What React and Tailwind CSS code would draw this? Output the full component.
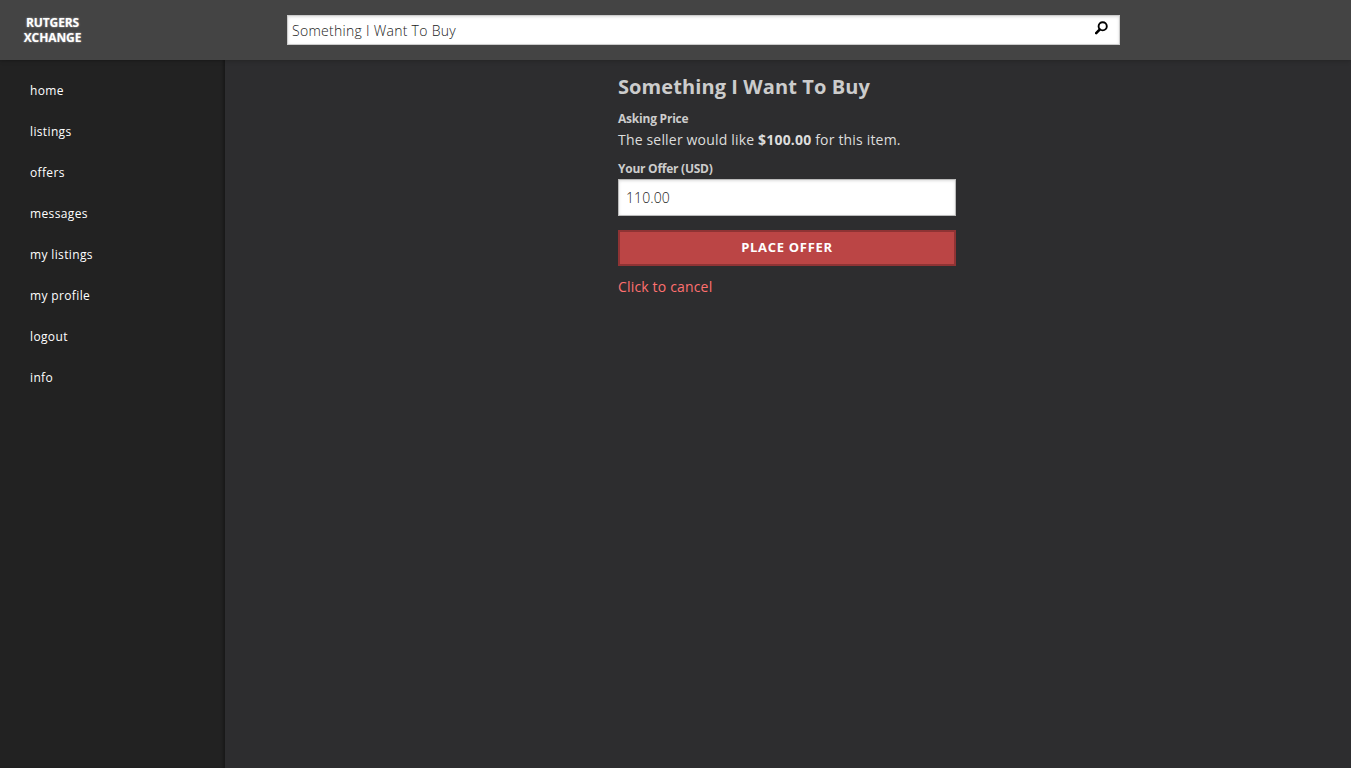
const navItems = ["home", "listings", "offers", "messages", "my listings", "my profile", "logout", "info"];

function Header() {
  return (
    <header className="relative z-10 flex h-[60px] shrink-0 items-center bg-[#444444] shadow-[0_0_5px_rgba(0,0,0,0.3)]">
      <a href="#" className="ml-[22px] w-[61px] text-center text-[12px] leading-[15px] font-bold tracking-[-0.1px] text-white [text-shadow:0_0_2px_rgba(255,255,255,0.6)]">
        RUTGERS XCHANGE
      </a>
      <form className="ml-[204px] flex h-[30px] w-[833px] items-center border border-[#cccccc] bg-white pr-[11px] pl-1 shadow-[inset_0_1px_3px_#dddddd]">
        <input
          aria-label="Search"
          defaultValue="Something I Want To Buy"
          className="h-full min-w-0 flex-1 bg-transparent pt-px text-[14px] font-light tracking-[0.28px] text-[#222222] outline-none"
        />
        <button type="button" aria-label="Submit search" className="mb-1">
          <svg width="13" height="14" viewBox="0 0 13 14" fill="none" stroke="#000000">
            <circle cx="7.7" cy="5.3" r="4.1" strokeWidth="1.9" />
            <path d="M4.6 8.6 1.2 12.1" strokeWidth="2.6" strokeLinecap="round" />
          </svg>
        </button>
      </form>
    </header>
  );
}

function Sidebar() {
  return (
    <nav className="w-[225px] shrink-0 bg-[#222222] pt-[10px] shadow-[inset_-3px_0_3px_-1px_rgba(0,0,0,0.3)]">
      {navItems.map((item) => (
        <a key={item} href="#" className="flex h-[41px] items-center pt-px pl-[30px] text-[12px] font-medium tracking-[0.36px] text-white">
          {item}
        </a>
      ))}
    </nav>
  );
}

export default function App() {
  return (
    <div className="flex h-screen flex-col overflow-hidden bg-[#2d2d2f] font-['Open_Sans',sans-serif]">
      <Header />
      <div className="flex min-h-0 flex-1">
        <Sidebar />
        <main className="flex-1 pl-[393px]">
          <div className="w-[338px] pt-[13px] text-[14px] leading-[22px] text-[#dddddd]">
            <h1 className="text-[20px] leading-7 font-bold tracking-[0.09px] text-[#cccccc]">Something I Want To Buy</h1>
            <h2 className="mt-[7px] text-[12px] leading-[21px] font-bold tracking-[-0.22px] text-[#cccccc]">Asking Price</h2>
            <p className="tracking-[0.18px] whitespace-nowrap">
              The seller would like <b>$100.00</b> for this item.
            </p>
            <label htmlFor="offer" className="mt-[7px] block text-[12px] leading-[21px] font-bold tracking-[-0.25px] text-[#cccccc]">
              Your Offer (USD)
            </label>
            <input
              id="offer"
              defaultValue="110.00"
              className="block h-[37px] w-full border border-[#bbbbbb] bg-white px-[7px] text-[14px] font-light tracking-[0.1px] text-[#222222] shadow-[inset_0_1px_3px_#dddddd] outline-none"
            />
            <button
              type="button"
              className="mt-[14px] flex h-9 w-full items-center justify-center border-2 border-[#8f3334] bg-[#bb4545] pb-[2px] text-[13px] font-bold tracking-[0.7px] text-white"
            >
              PLACE OFFER
            </button>
            <a href="#" className="mt-[10px] block tracking-[0.17px] text-[#ff7070]">
              Click to cancel
            </a>
          </div>
        </main>
      </div>
    </div>
  );
}
